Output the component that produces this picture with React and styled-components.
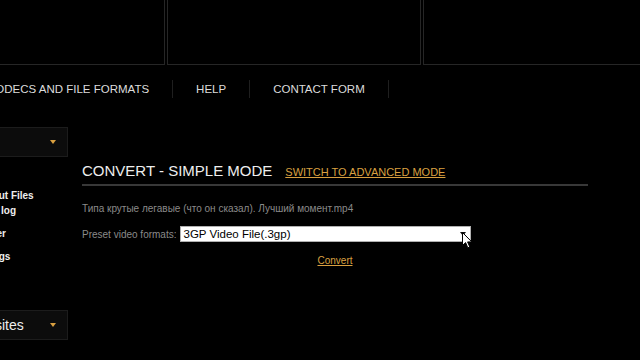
import React from "react";
import styled, { createGlobalStyle } from "styled-components";

const Global = createGlobalStyle`
  html, body {
    margin: 0;
    background: #000;
    overflow: hidden;
  }
  body {
    font-family: "Liberation Sans", Arial, sans-serif;
  }
`;

const Page = styled.div`
  margin-left: -150px;
  width: 1000px;
`;

const TopRow = styled.div`
  display: flex;
  gap: 2px;
  height: 65px;
`;

const TopBox = styled.div`
  width: ${(p) => p.$w}px;
  box-sizing: border-box;
  border: 1px solid #262626;
  border-top: none;
`;

const Nav = styled.nav`
  display: flex;
  align-items: center;
  height: 48px;
  padding-left: 114px;
`;

const NavItem = styled.a`
  padding: 0 23px;
  line-height: 18px;
  font-size: 11.5px;
  color: #dcdcdc;
  text-transform: uppercase;
  text-decoration: none;
  border-right: 1px solid #1f1f1f;
`;

const Body = styled.div`
  display: flex;
  gap: 14px;
  margin-top: 14px;
`;

const Sidebar = styled.aside`
  width: 218px;
`;

const Panel = styled.div`
  height: 30px;
  box-sizing: border-box;
  margin-top: ${(p) => p.$top || 0}px;
  border: 1px solid #1c1c1c;
  background: #0c0c0c;
  display: flex;
  align-items: center;
  justify-content: space-between;
  padding: 0 11px 0 105px;
`;

const PanelLabel = styled.span`
  font-size: 14px;
  color: #eee;
`;

const Caret = styled.span`
  width: 0;
  height: 0;
  border-left: 3.5px solid transparent;
  border-right: 3.5px solid transparent;
  border-top: 4px solid #d9a040;
`;

const Menu = styled.ul`
  list-style: none;
  margin: 31px 0 0;
  padding-left: 102px;
`;

const MenuItem = styled.li`
  font-size: 10px;
  font-weight: bold;
  line-height: 15px;
  color: #eee;
  margin-bottom: 8px;
`;

const Main = styled.main`
  width: 506px;
  padding-top: 34px;
`;

const HeadingRow = styled.div`
  display: flex;
  align-items: baseline;
  gap: 13px;
  line-height: 20px;
  padding-bottom: 2px;
  border-bottom: 2px solid #383838;
`;

const Title = styled.h1`
  margin: 0;
  font-size: 15px;
  font-weight: normal;
  color: #eee;
`;

const OrangeLink = styled.a`
  font-size: ${(p) => p.$size || 11}px;
  color: #d9a040;
  text-decoration: underline;
`;

const FileName = styled.div`
  margin-top: 16px;
  font-size: 10px;
  line-height: 14px;
  color: #8a8a8a;
`;

const PresetRow = styled.div`
  margin-top: 10px;
  display: flex;
  align-items: center;
  gap: 4px;
  height: 16px;
`;

const Label = styled.span`
  font-size: 10px;
  color: #8a8a8a;
`;

const Select = styled.div`
  position: relative;
  width: 291px;
  height: 16px;
  box-sizing: border-box;
  background: #fff;
  border: 1px solid #b0b0b0;
  padding-left: 2px;
  display: flex;
  align-items: center;
  font-size: 11.5px;
  color: #000;
`;

const SelectArrow = styled.span`
  margin-left: auto;
  margin-right: 4px;
  width: 0;
  height: 0;
  border-left: 3px solid transparent;
  border-right: 3px solid transparent;
  border-top: 4px solid #111;
`;

const Pointer = styled.svg`
  position: absolute;
  left: 281px;
  top: 5px;
`;

const ConvertRow = styled.div`
  margin-top: 10px;
  text-align: center;
  line-height: 14px;
`;

export default function App() {
  return (
    <>
      <Global />
      <Page>
        <TopRow>
          <TopBox $w={315} />
          <TopBox $w={254} />
          <TopBox $w={254} />
        </TopRow>
        <Nav>
          <NavItem href="#codecs">Codecs and file formats</NavItem>
          <NavItem href="#help">Help</NavItem>
          <NavItem href="#contact">Contact form</NavItem>
        </Nav>
        <Body>
          <Sidebar>
            <Panel>
              <PanelLabel>Menu</PanelLabel>
              <Caret />
            </Panel>
            <Menu>
              <MenuItem>
                Facts about Files
                <br />
                Members' log
              </MenuItem>
              <MenuItem>Transcoder</MenuItem>
              <MenuItem>File settings</MenuItem>
            </Menu>
            <Panel $top={46}>
              <PanelLabel>Other sites</PanelLabel>
              <Caret />
            </Panel>
          </Sidebar>
          <Main>
            <HeadingRow>
              <Title>CONVERT - SIMPLE MODE</Title>
              <OrangeLink href="#advanced">SWITCH TO ADVANCED MODE</OrangeLink>
            </HeadingRow>
            <FileName>Типа крутые легавые (что он сказал). Лучший момент.mp4</FileName>
            <PresetRow>
              <Label>Preset video formats:</Label>
              <Select>
                3GP Video File(.3gp)
                <SelectArrow />
                <Pointer width="11" height="17" viewBox="0 0 11 17">
                  <path
                    d="M0.5 0.5 L0.5 13.5 L3.6 10.6 L5.8 15.8 L7.8 15 L5.6 9.9 L9.8 9.9 Z"
                    fill="#fff"
                    stroke="#000"
                    strokeWidth="1"
                    strokeLinejoin="round"
                  />
                </Pointer>
              </Select>
            </PresetRow>
            <ConvertRow>
              <OrangeLink href="#convert" $size={10}>
                Convert
              </OrangeLink>
            </ConvertRow>
          </Main>
        </Body>
      </Page>
    </>
  );
}
